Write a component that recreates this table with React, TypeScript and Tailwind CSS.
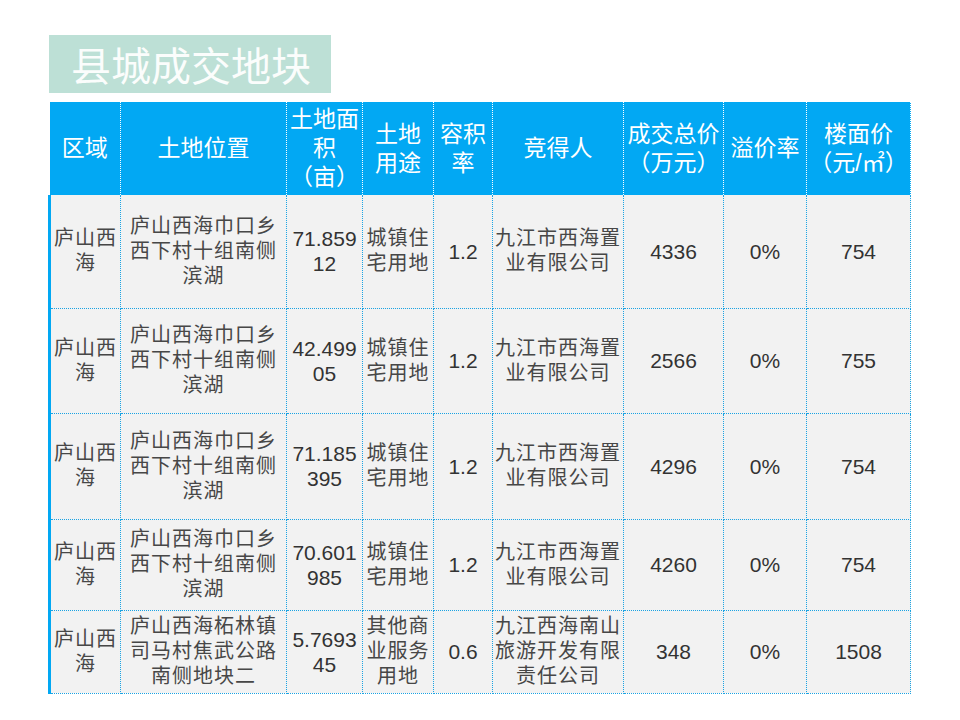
import React from "react";

type Row = {
  area: string;
  location: string;
  size: string;
  usage: string;
  ratio: string;
  buyer: string;
  total: string;
  premium: string;
  unitPrice: string;
  height: string;
};

const rows: Row[] = [
  {
    area: "庐山西海",
    location: "庐山西海巾口乡西下村十组南侧滨湖",
    size: "71.85912",
    usage: "城镇住宅用地",
    ratio: "1.2",
    buyer: "九江市西海置业有限公司",
    total: "4336",
    premium: "0%",
    unitPrice: "754",
    height: "h-[113px]",
  },
  {
    area: "庐山西海",
    location: "庐山西海巾口乡西下村十组南侧滨湖",
    size: "42.49905",
    usage: "城镇住宅用地",
    ratio: "1.2",
    buyer: "九江市西海置业有限公司",
    total: "2566",
    premium: "0%",
    unitPrice: "755",
    height: "h-[105px]",
  },
  {
    area: "庐山西海",
    location: "庐山西海巾口乡西下村十组南侧滨湖",
    size: "71.185395",
    usage: "城镇住宅用地",
    ratio: "1.2",
    buyer: "九江市西海置业有限公司",
    total: "4296",
    premium: "0%",
    unitPrice: "754",
    height: "h-[106px]",
  },
  {
    area: "庐山西海",
    location: "庐山西海巾口乡西下村十组南侧滨湖",
    size: "70.601985",
    usage: "城镇住宅用地",
    ratio: "1.2",
    buyer: "九江市西海置业有限公司",
    total: "4260",
    premium: "0%",
    unitPrice: "754",
    height: "h-[91px]",
  },
  {
    area: "庐山西海",
    location: "庐山西海柘林镇司马村焦武公路南侧地块二",
    size: "5.769345",
    usage: "其他商业服务用地",
    ratio: "0.6",
    buyer: "九江西海南山旅游开发有限责任公司",
    total: "348",
    premium: "0%",
    unitPrice: "1508",
    height: "h-[83px]",
  },
];

const widths = [71, 166, 76, 71, 59, 131, 100, 83, 104];

const headCell =
  "border-r border-dotted border-r-white px-0 align-middle text-center text-[23px] leading-[29px] text-white font-normal";
const bodyCell =
  "border-r border-b border-dotted border-[#1aa3e3] px-0 align-middle text-center text-[20px] leading-[25px] tracking-[1px] text-[#474747]";
const numCell =
  "border-r border-b border-dotted border-[#1aa3e3] px-[4px] align-middle text-center text-[21px] leading-[25px] text-[#333333] break-all";

export default function App() {
  return (
    <div className="min-h-[720px] w-[960px] bg-white pt-[35px] pl-[48px] font-['Liberation_Sans','Noto_Sans_CJK_SC',sans-serif]">
      <div className="ml-[1px] flex h-[58px] w-[282px] items-center bg-[#bde0d6] pl-[22px]">
        <span className="text-[40px] leading-none text-[#fbfdfc] font-['Noto_Sans_CJK_SC',sans-serif]">
          县城成交地块
        </span>
      </div>

      <table className="mt-[9px] w-[861px] table-fixed border-collapse">
        <colgroup>
          {widths.map((w, i) => (
            <col key={i} style={{ width: w }} />
          ))}
        </colgroup>
        <thead>
          <tr className="h-[93px] bg-[#02a8f3]">
            <th className={headCell}>区域</th>
            <th className={headCell}>土地位置</th>
            <th className={headCell}>
              土地面
              <br />
              积
              <br />
              （亩）
            </th>
            <th className={headCell}>
              土地
              <br />
              用途
            </th>
            <th className={headCell}>
              容积
              <br />
              率
            </th>
            <th className={headCell}>竞得人</th>
            <th className={headCell}>
              成交总价
              <br />
              （万元）
            </th>
            <th className={headCell}>溢价率</th>
            <th className={`${headCell} whitespace-nowrap`}>
              楼面价
              <br />
              （元/㎡）
            </th>
          </tr>
        </thead>
        <tbody className="bg-[#f2f2f2]">
          {rows.map((r, i) => (
            <tr key={i} className={r.height}>
              <td
                className={`${bodyCell} border-l-[3px] border-l-[#02a8f3] [border-left-style:solid]`}
              >
                {r.area}
              </td>
              <td className={bodyCell}>{r.location}</td>
              <td className={numCell}>{r.size}</td>
              <td className={bodyCell}>{r.usage}</td>
              <td className={numCell}>{r.ratio}</td>
              <td className={bodyCell}>{r.buyer}</td>
              <td className={numCell}>{r.total}</td>
              <td className={numCell}>{r.premium}</td>
              <td className={numCell}>{r.unitPrice}</td>
            </tr>
          ))}
        </tbody>
      </table>
    </div>
  );
}
